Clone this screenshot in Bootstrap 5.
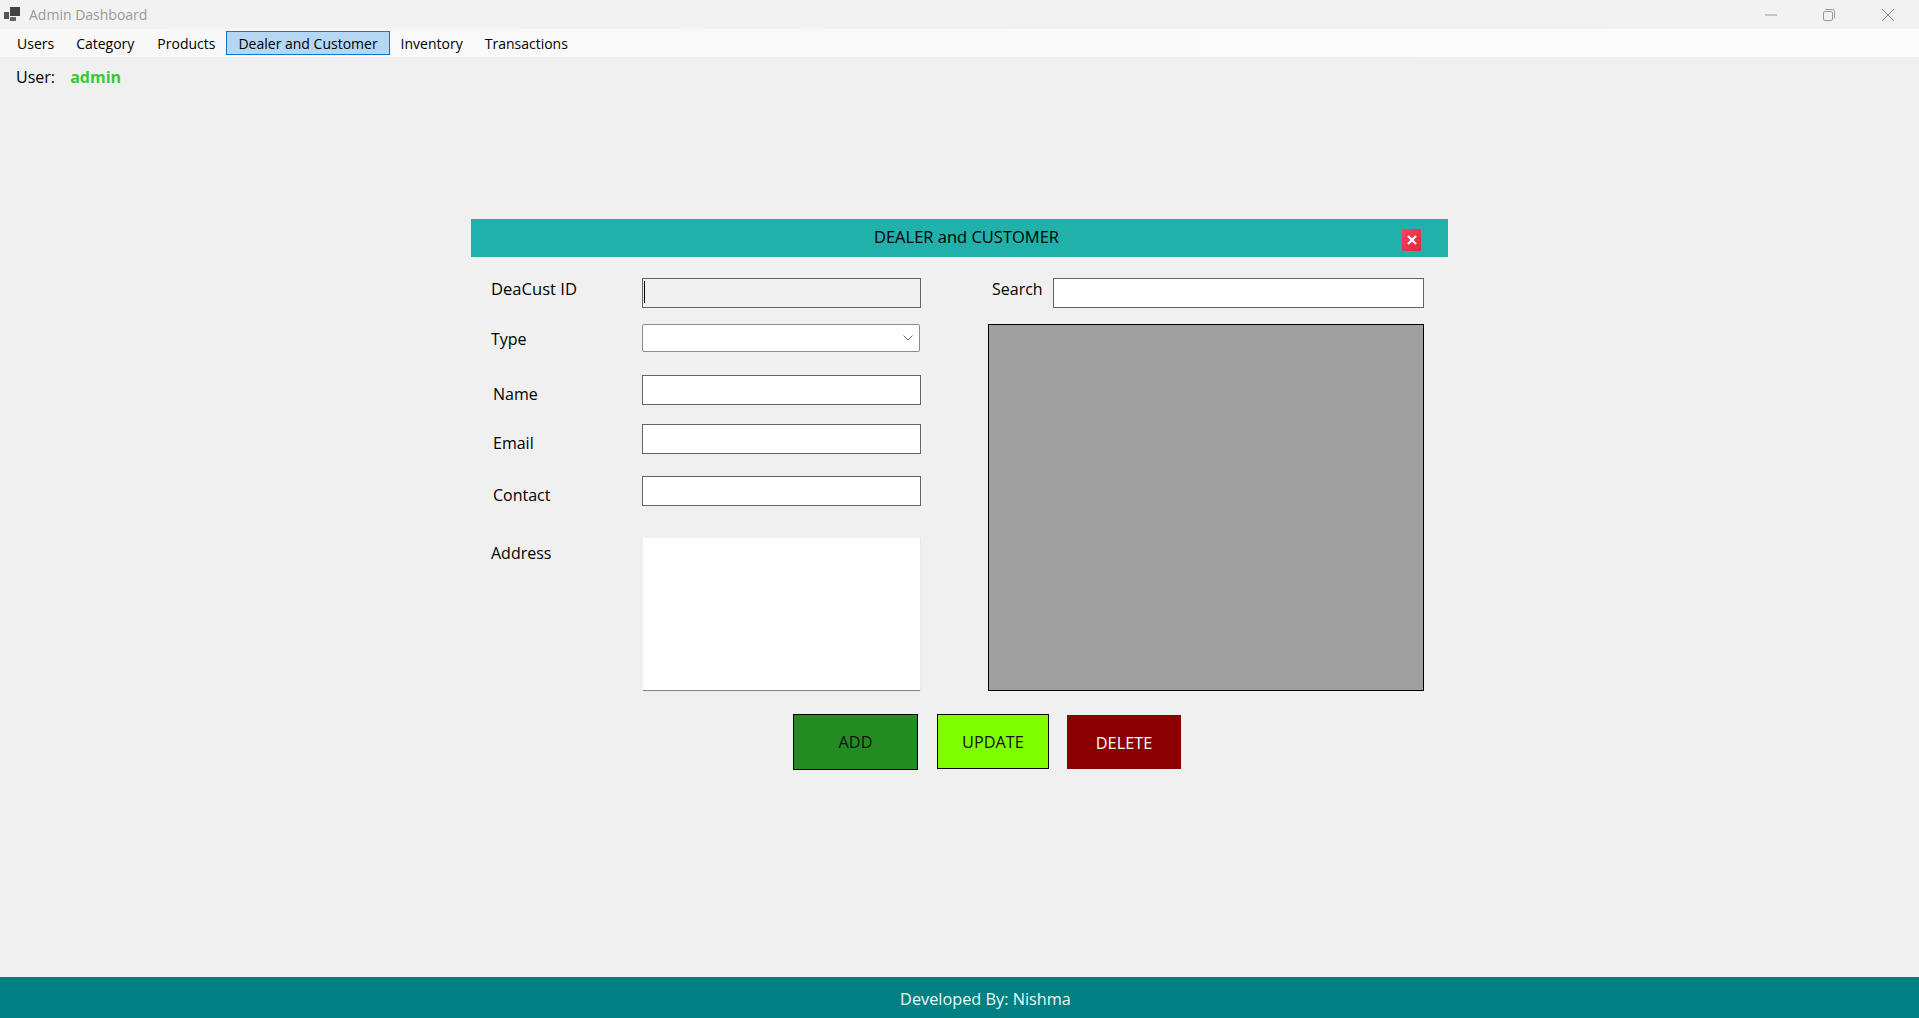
<!DOCTYPE html>
<html>
<head>
  <title>Admin Dashboard</title>
  <link href="https://cdn.jsdelivr.net/npm/bootstrap@5.3.2/dist/css/bootstrap.min.css" rel="stylesheet">
  <style>
    html, body { height: 100%; }
    body { background: #f0f0f0; color: #000; font-family: "Open Sans", "Noto Sans", sans-serif; font-size: 15px; overflow: hidden; }
    .app-shell { height: 1018px; }
    .title-strip { height: 29px; background: #f2f2f2; }
    .app-icon { margin-left: 4px; margin-right: 9px; }
    .title-text { color: #999; font-size: 14px; line-height: 29px; }
    .win-controls { padding-right: 2px; }
    .win-btn { width: 58.5px; height: 29px; }
    .menu-strip { height: 28px; padding-left: 6px; background: linear-gradient(90deg, #f8f8f8, #fafafa 50%, #fcfcfc); }
    .menu-entry { height: 24px; margin-top: 2px; padding: 0 10px; border: 1px solid transparent; font-size: 14px; line-height: 23px; color: #000; text-decoration: none; }
    .menu-entry:nth-child(3) { margin-left: 1px; }
    .menu-entry.is-on { padding: 0 11px; background: #b5d7f3; border-color: #0a78d4; }
    .user-line { padding: 8px 0 0 16px; height: 40px; font-size: 16px; line-height: 24px; }
    .user-name { color: #32cd32; font-weight: 700; margin-left: 11px; }
    .panel-wrap { margin: 122px 0 0 471px; width: 977px; }
    .panel-head { height: 38px; background: #20b2aa; font-size: 16.5px; padding: 0 0 2px 14px; }
    .panel-close { position: absolute; left: 931px; top: 10px; width: 19px; height: 22px; padding: 0; border: 0; border-radius: 1px; background: linear-gradient(135deg, #f2465f, #e0283f); }
    .panel-body-row { padding-top: 21px; }
    .left-col { width: 450px; padding-left: 20px; }
    .right-col { margin-left: 67px; width: 436px; }
    .gap-after-id { margin-bottom: 16px; }
    .gap-after-type { margin-bottom: 23px; }
    .gap-after-name { margin-bottom: 19px; }
    .gap-after-email { margin-bottom: 22px; }
    .gap-after-contact { margin-bottom: 32px; }
    .field-label { width: 151px; font-size: 16px; line-height: 24px; }
    .lbl-top { margin-top: -1px; }
    .lbl-mid { padding-top: 3px; }
    .lbl-low { height: 30px; padding-top: 8px; padding-left: 2px; line-height: 22px; }
    .id-text { font-size: 16.6px; }
    .win-input.form-control { width: 279px; height: 30px; padding: 0 3px; border: 1px solid #646464; border-radius: 0; background-color: #fff; box-shadow: none; }
    .win-input.id-input { background-color: #f0f0f0; background-image: linear-gradient(#000, #000); background-repeat: no-repeat; background-size: 1px 22px; background-position: 1px 2px; }
    .win-combo.form-select { width: 278px; height: 28px; padding: 0 3px; border: 1px solid #8c8c8c; border-radius: 2px; background-color: #fff; background-size: 10px 6px; background-position: right 6px center; background-image: url("data:image/svg+xml,%3csvg xmlns='http://www.w3.org/2000/svg' viewBox='0 0 10 6'%3e%3cpath fill='none' stroke='%23666' d='M.5.5 5 5 9.5.5'/%3e%3c/svg%3e"); }
    .win-memo.form-control { width: 277px; height: 153px; margin-left: 1px; padding: 0 3px; border: 0; border-bottom: 1px solid #808080; border-radius: 0; box-shadow: 1px 0 0 #e8e8e8; resize: none; }
    .search-label { font-size: 16px; line-height: 24px; margin: -1px 10px 0 4px; width: 51px; }
    .search-input.form-control { width: 371px; }
    .grid-box { width: 436px; height: 367px; margin-top: 16px; background: #a0a0a0; border: 1px solid #000; }
    .action-row { margin: 23px 0 0 322px; }
    .act-btn { height: 56px; padding: 0; border-radius: 0; font-size: 16.3px; }
    .act-add { width: 125px; background: #228b22; border: 1px solid #000; color: #111; }
    .act-update { width: 112px; height: 55px; margin-left: 19px; padding-top: 1px; background: #7fff00; border: 1px solid #000; color: #111; }
    .act-delete { width: 116px; margin-left: 17px; padding-top: 2px; background: #8b0000; border: 1px solid #f0f0f0; color: #fff; }
    .foot-strip { height: 41px; background: #008080; color: #eafafa; font-size: 16.3px; padding: 4px 0 0 52px; }
  </style>
</head>
<body>
  <div class="app-shell d-flex flex-column">
    <div class="title-strip d-flex align-items-center">
      <svg class="app-icon" width="16" height="15" viewBox="0 0 16 15"><rect x="0" y="5" width="5" height="7" fill="#555"/><rect x="6" y="0" width="10" height="9" fill="#444"/><rect x="6" y="10" width="6" height="4" fill="#666"/></svg>
      <span class="title-text">Admin Dashboard</span>
      <div class="win-controls ms-auto d-flex">
        <div class="win-btn d-flex align-items-center justify-content-center"><svg width="12" height="12" viewBox="0 0 12 12"><path d="M0 6h12" stroke="#999" stroke-width="1"/></svg></div>
        <div class="win-btn d-flex align-items-center justify-content-center"><svg width="12" height="12" viewBox="0 0 12 12" fill="none" stroke="#999"><rect x=".5" y="2.5" width="9" height="9" rx="1.5"/><path d="M2.5 .5h7a2 2 0 0 1 2 2v7"/></svg></div>
        <div class="win-btn d-flex align-items-center justify-content-center"><svg width="12" height="12" viewBox="0 0 12 12"><path d="M0 0l12 12M12 0L0 12" stroke="#888"/></svg></div>
      </div>
    </div>

    <nav class="menu-strip d-flex">
      <a class="menu-entry" href="#">Users</a>
      <a class="menu-entry" href="#">Category</a>
      <a class="menu-entry" href="#">Products</a>
      <a class="menu-entry is-on" href="#">Dealer and Customer</a>
      <a class="menu-entry" href="#">Inventory</a>
      <a class="menu-entry" href="#">Transactions</a>
    </nav>

    <div class="user-line">User: <span class="user-name">admin</span></div>

    <main class="flex-grow-1">
      <div class="panel-wrap">
        <div class="panel-head position-relative d-flex align-items-center justify-content-center">
          DEALER and CUSTOMER
          <button class="panel-close d-flex align-items-center justify-content-center" type="button" aria-label="Close">
            <svg width="10" height="10" viewBox="0 0 10 10"><path d="M1 1l8 8M9 1L1 9" stroke="#fff" stroke-width="2"/></svg>
          </button>
        </div>

        <div class="panel-body-row d-flex">
          <div class="left-col">
            <div class="gap-after-id d-flex"><label class="field-label lbl-top id-text">DeaCust ID</label><input class="form-control win-input id-input" type="text"></div>
            <div class="gap-after-type d-flex"><label class="field-label lbl-mid">Type</label><select class="form-select win-combo"></select></div>
            <div class="gap-after-name d-flex"><label class="field-label lbl-low">Name</label><input class="form-control win-input" type="text"></div>
            <div class="gap-after-email d-flex"><label class="field-label lbl-low">Email</label><input class="form-control win-input" type="text"></div>
            <div class="gap-after-contact d-flex"><label class="field-label lbl-low">Contact</label><input class="form-control win-input" type="text"></div>
            <div class="d-flex"><label class="field-label lbl-mid">Address</label><textarea class="form-control win-memo"></textarea></div>
          </div>
          <div class="right-col">
            <div class="d-flex"><label class="search-label">Search</label><input class="form-control win-input search-input" type="text"></div>
            <div class="grid-box"></div>
          </div>
        </div>

        <div class="action-row d-flex">
          <button class="btn act-btn act-add" type="button">ADD</button>
          <button class="btn act-btn act-update" type="button">UPDATE</button>
          <button class="btn act-btn act-delete" type="button">DELETE</button>
        </div>
      </div>
    </main>

    <footer class="foot-strip d-flex align-items-center justify-content-center">Developed By: Nishma</footer>
  </div>
  <script src="https://cdn.jsdelivr.net/npm/bootstrap@5.3.2/dist/js/bootstrap.bundle.min.js"></script>
</body>
</html>
